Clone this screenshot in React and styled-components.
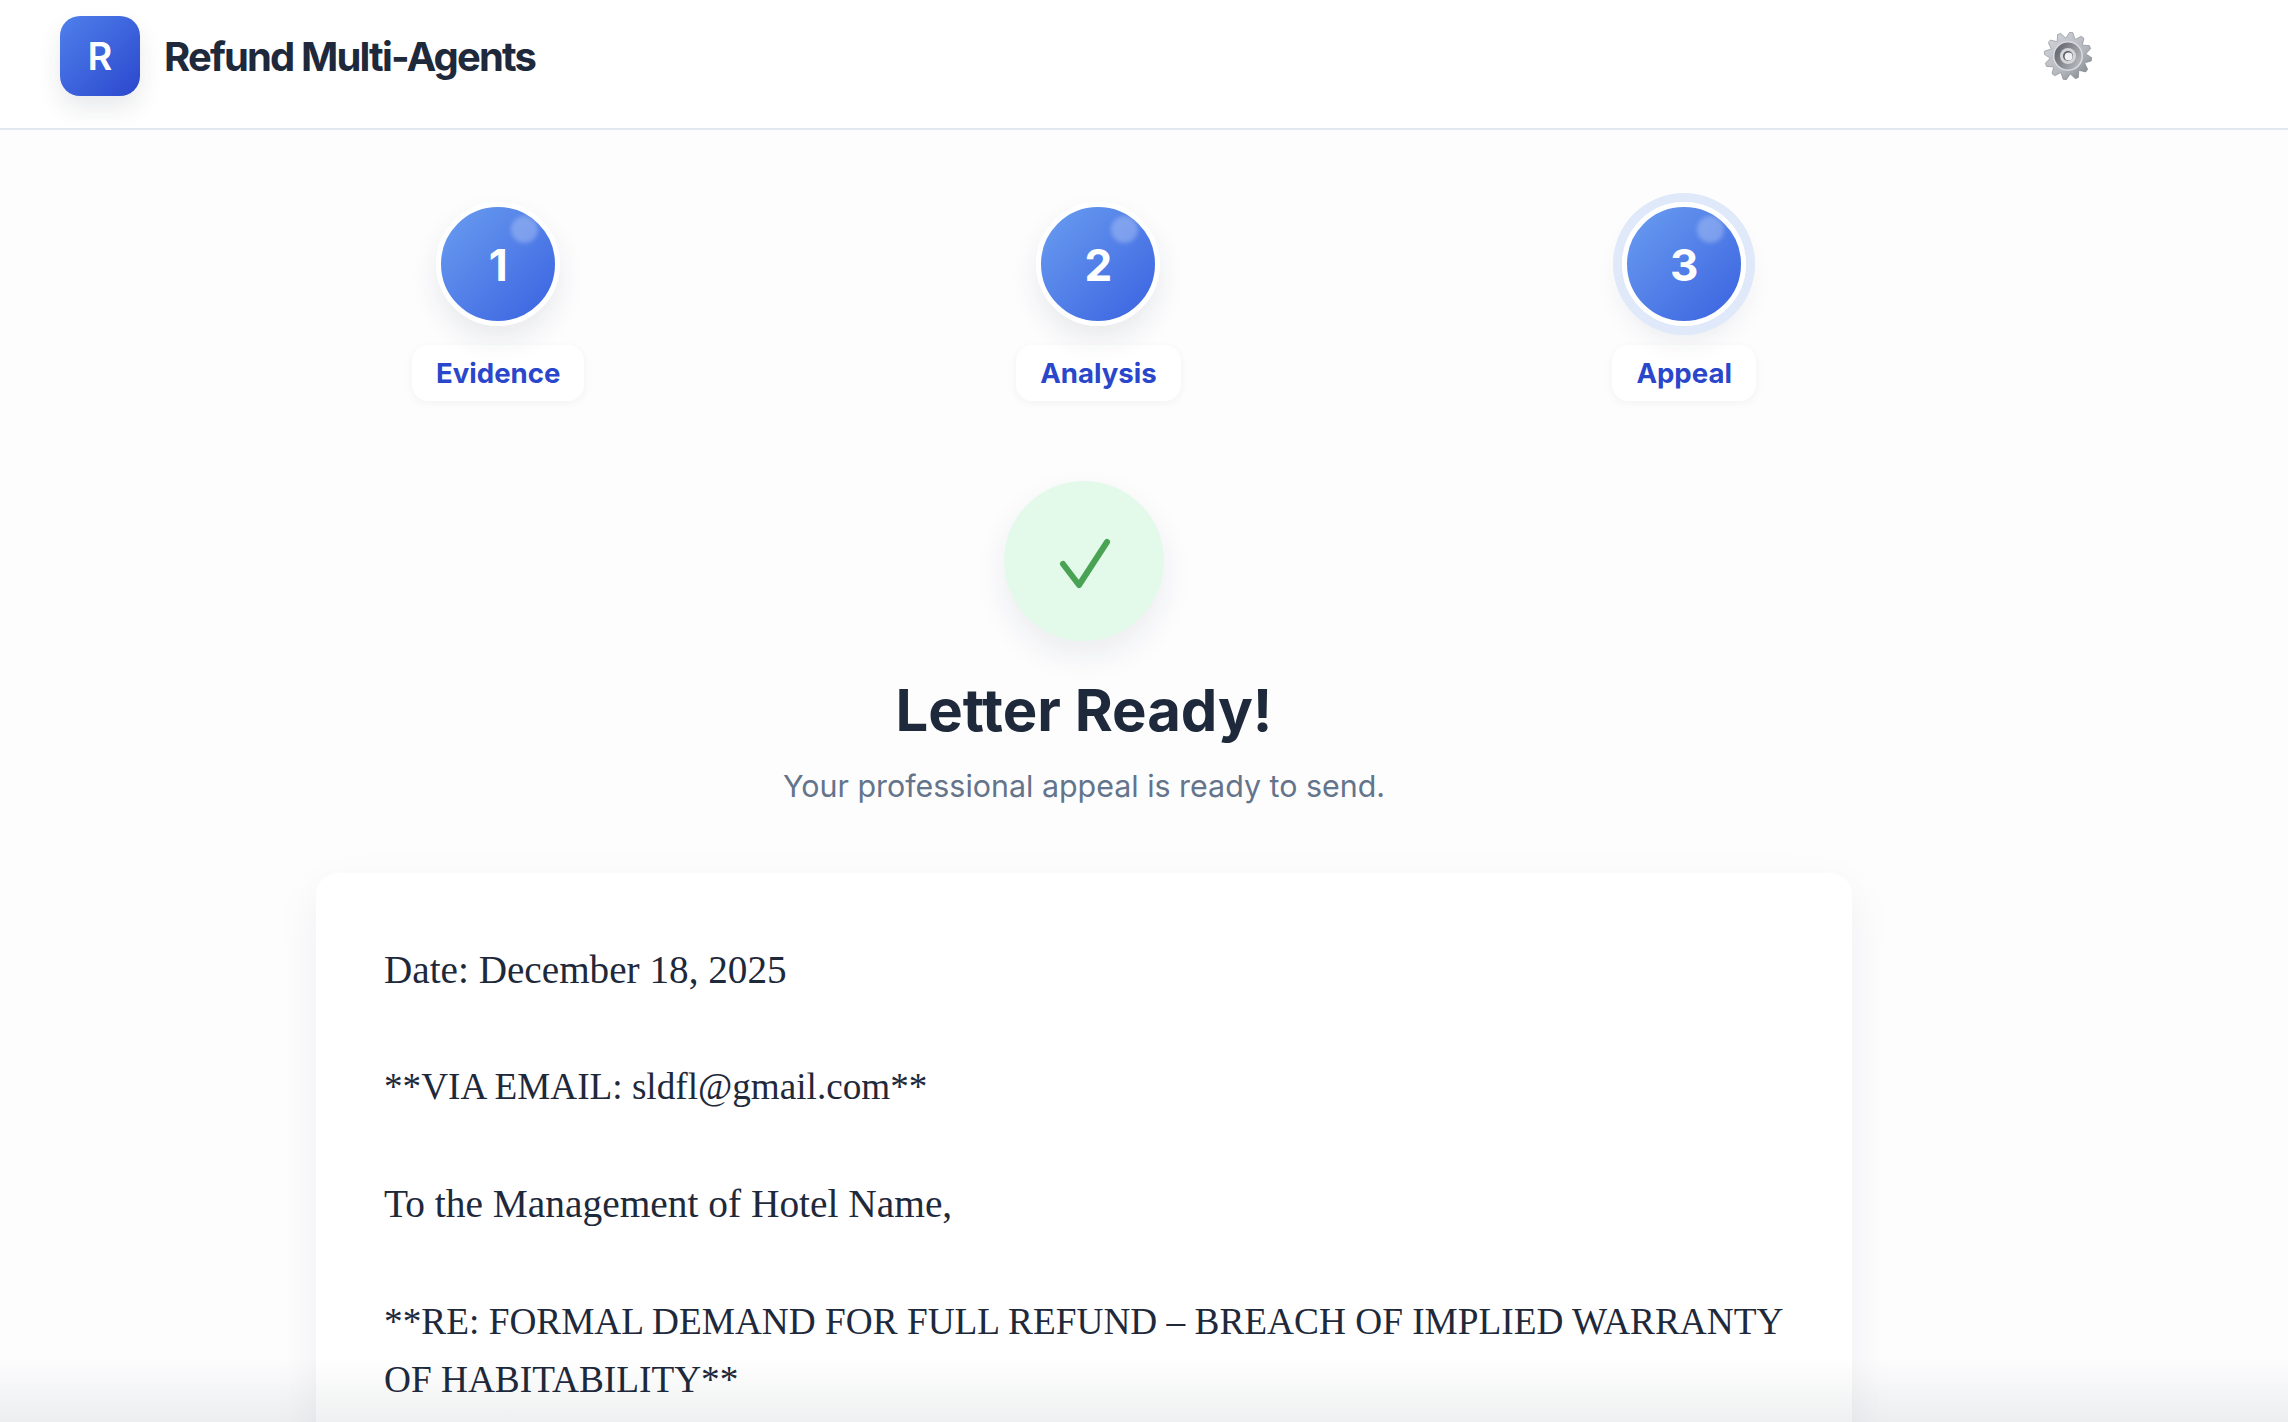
import React from "react";
import styled, { createGlobalStyle } from "styled-components";

const GlobalStyle = createGlobalStyle`
  html, body {
    margin: 0;
    height: 100%;
    overflow: hidden;
    background: #fdfdfe;
    font-family: Inter, "Liberation Sans", sans-serif;
  }
`;

const steps = [
  { num: 1, label: "Evidence" },
  { num: 2, label: "Analysis" },
  { num: 3, label: "Appeal", active: true }
];

const letterLines = [
  { text: "Date: December 18, 2025", size: 39.2 },
  { text: "**VIA EMAIL: sldfl@gmail.com**", size: 37.2 },
  { text: "To the Management of Hotel Name,", size: 39.4 },
  {
    text: "**RE: FORMAL DEMAND FOR FULL REFUND – BREACH OF IMPLIED WARRANTY OF HABITABILITY**",
    size: 37.3,
    tight: true
  },
  { text: "CLAIM FOR REFUND: full bill", size: 37.3 }
];

// 12 tooth outline, computed so each tooth tapers to a narrow tip
const gearPoints = Array.from({ length: 12 }, (_, i) => {
  const a = ((i * 30 + 8) * Math.PI) / 180;
  const pt = (r, off) =>
    `${(24 + r * Math.sin(a + off)).toFixed(2)},${(24 - r * Math.cos(a + off)).toFixed(2)}`;
  return [pt(18.5, -0.24), pt(23.8, -0.07), pt(23.8, 0.07), pt(18.5, 0.24)].join(" ");
}).join(" ");

const GearIcon = () => (
  <svg width="48" height="48" viewBox="0 0 48 48">
    <defs>
      <linearGradient id="gearBody" x1="0" y1="0" x2="1" y2="1">
        <stop offset="0" stopColor="#d4d7dc" />
        <stop offset="0.6" stopColor="#b4b8be" />
        <stop offset="1" stopColor="#767b83" />
      </linearGradient>
      <linearGradient id="gearDish" x1="0" y1="0.2" x2="1" y2="0.8">
        <stop offset="0" stopColor="#5f636a" />
        <stop offset="1" stopColor="#b9bcc1" />
      </linearGradient>
    </defs>
    <polygon points={gearPoints} fill="url(#gearBody)" stroke="#6f747b" strokeWidth="0.5" />
    <circle cx="24" cy="24" r="15" fill="#d9dbdf" />
    <circle cx="24" cy="24" r="13.5" fill="url(#gearDish)" />
    <circle cx="24" cy="24" r="8" fill="#d3d5d8" />
    <circle cx="24" cy="24" r="5" fill="#585c63" />
    <circle cx="24.6" cy="24.6" r="4" fill="#eef0f2" />
  </svg>
);

const CheckIcon = () => (
  <svg width="60" height="60" viewBox="0 0 60 60" fill="none">
    <path
      d="M9 33 L25 54 L53 11"
      stroke="#4aa354"
      strokeWidth="6"
      strokeLinecap="round"
      strokeLinejoin="round"
    />
  </svg>
);

const App = () => (
  <>
    <GlobalStyle />
    <Header>
      <Brand>
        <Logo>R</Logo>
        <BrandName>Refund Multi-Agents</BrandName>
      </Brand>
      <GearIcon />
    </Header>
    <Main>
      <Stepper>
        {steps.map(step => (
          <Step key={step.num}>
            <StepCircle $active={step.active}>{step.num}</StepCircle>
            <StepLabel>{step.label}</StepLabel>
          </Step>
        ))}
      </Stepper>
      <Hero>
        <SuccessBadge>
          <CheckIcon />
        </SuccessBadge>
        <Title>Letter Ready!</Title>
        <Subtitle>Your professional appeal is ready to send.</Subtitle>
      </Hero>
      <LetterCard>
        {letterLines.map(line => (
          <LetterLine key={line.text} $size={line.size} $tight={line.tight}>
            {line.text}
          </LetterLine>
        ))}
      </LetterCard>
    </Main>
    <BottomFade />
  </>
);

const Header = styled.header`
  height: 112px;
  padding: 0 196px 16px 60px;
  border-bottom: 2px solid #e2e8f0;
  background: #ffffff;
  display: flex;
  align-items: center;
  justify-content: space-between;
`;

const Brand = styled.div`
  display: flex;
  align-items: center;
  gap: 24px;
`;

const Logo = styled.div`
  width: 80px;
  height: 80px;
  border-radius: 20px;
  background: linear-gradient(135deg, #4f80ec 0%, #2b47cd 100%);
  box-shadow: 0 12px 24px rgba(30, 41, 59, 0.1);
  color: #ffffff;
  font-size: 38px;
  font-weight: 600;
  display: flex;
  align-items: center;
  justify-content: center;
`;

const BrandName = styled.h1`
  margin: 0;
  color: #1e293b;
  font-size: 40px;
  font-weight: 700;
  letter-spacing: -1.85px;
`;

const Main = styled.main`
  width: 1536px;
  margin-left: 316px;
`;

const Stepper = styled.div`
  display: flex;
  justify-content: space-between;
  padding: 0 96px;
  margin-top: 72px;
`;

const Step = styled.div`
  display: flex;
  flex-direction: column;
  align-items: center;
  gap: 19px;
`;

const StepCircle = styled.div`
  position: relative;
  width: 114px;
  height: 112px;
  padding-top: 2px;
  border: 5px solid #ffffff;
  border-radius: 50%;
  background: linear-gradient(135deg, #6a9df0 0%, #3a62e0 100%);
  box-shadow: ${p =>
    p.$active
      ? "0 0 0 9px #dfe9fa, 0 14px 28px rgba(30, 41, 59, 0.09)"
      : "0 14px 28px rgba(30, 41, 59, 0.09)"};
  color: #ffffff;
  font-size: 44px;
  font-weight: 700;
  display: flex;
  align-items: center;
  justify-content: center;

  &::after {
    content: "";
    position: absolute;
    top: 9px;
    right: 17px;
    width: 27px;
    height: 27px;
    border-radius: 50%;
    background: rgba(255, 255, 255, 0.25);
    filter: blur(2px);
  }
`;

const StepLabel = styled.div`
  height: 56px;
  padding: 0 24px;
  border-radius: 16px;
  background: #ffffff;
  box-shadow: 0 2px 8px rgba(30, 41, 59, 0.05);
  color: #2a47cc;
  font-size: 27.6px;
  font-weight: 700;
  display: flex;
  align-items: center;
`;

const Hero = styled.section`
  display: flex;
  flex-direction: column;
  align-items: center;
  margin-top: 80px;
`;

const SuccessBadge = styled.div`
  width: 160px;
  height: 160px;
  border-radius: 50%;
  background: #e3f9e9;
  box-shadow: 0 14px 32px rgba(30, 41, 59, 0.08);
  display: flex;
  align-items: center;
  justify-content: center;
`;

const Title = styled.h2`
  margin: 35px 0 0;
  color: #1e293b;
  font-size: 58px;
  line-height: 68px;
  font-weight: 700;
`;

const Subtitle = styled.p`
  margin: 20px 0 0;
  color: #64748b;
  font-size: 30.4px;
  line-height: 44px;
`;

const LetterCard = styled.article`
  margin-top: 65px;
  padding: 68px;
  background: #ffffff;
  border-radius: 22px;
  box-shadow: 0 16px 48px rgba(30, 41, 59, 0.06);
`;

const LetterLine = styled.p`
  margin: 0 0 ${p => (p.$tight ? "0" : "58.6px")};
  color: #1e293b;
  font-family: "Liberation Serif", "Times New Roman", serif;
  font-size: ${p => p.$size}px;
  line-height: 58.6px;
`;

const BottomFade = styled.div`
  position: fixed;
  left: 0;
  right: 0;
  bottom: 0;
  height: 64px;
  background: linear-gradient(180deg, rgba(30, 41, 59, 0) 0%, rgba(30, 41, 59, 0.07) 100%);
  pointer-events: none;
`;

export default App;
